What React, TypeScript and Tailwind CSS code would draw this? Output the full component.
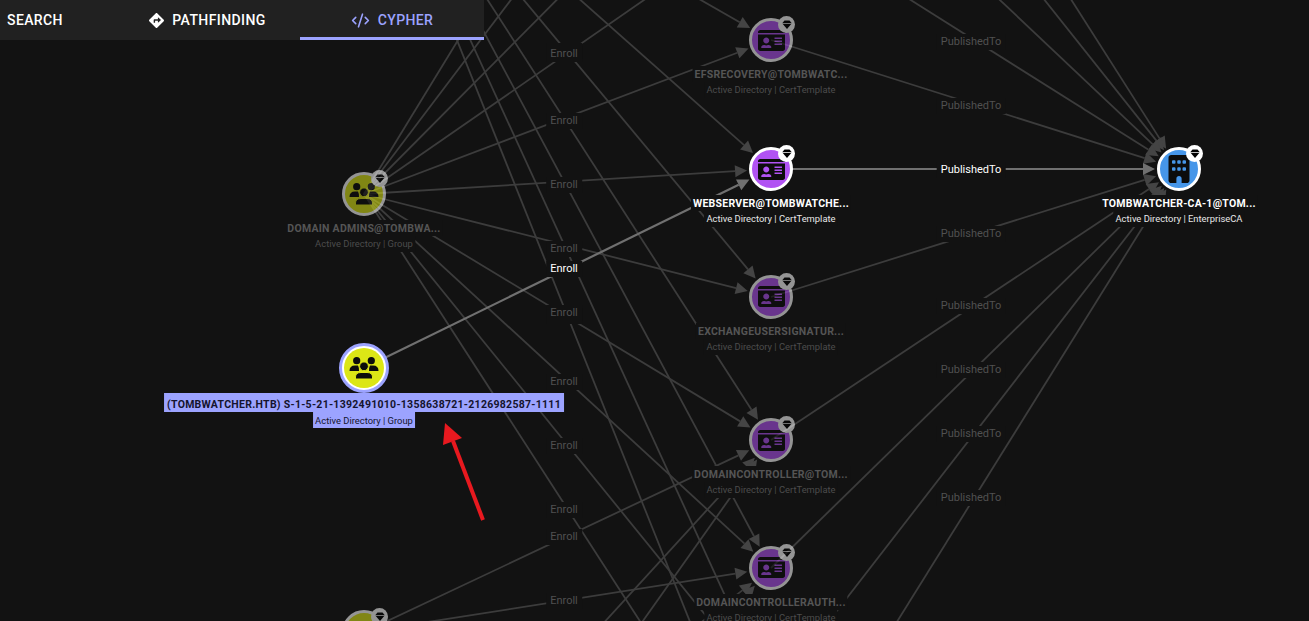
import { FaBuilding } from "react-icons/fa6";
import { FaDirections, FaIdCard } from "react-icons/fa";
import { CodeXml } from "lucide-react";

const GROUP_X = 364;
const CERT_X = 771;
const CA = { x: 1179, y: 169 };

const certYs = [-472, -344, -216, -88, 40, 169, 297, 440, 568, 696, 824];

type Edge = { from: [number, number]; to: [number, number]; hi?: boolean };

const groupEdges: Edge[] = [];
certYs.forEach((c) => {
  if (c > -88) groupEdges.push({ from: [GROUP_X, -192], to: [CERT_X, c] });
  groupEdges.push({ from: [GROUP_X, 194], to: [CERT_X, c] });
});
[
  [632, 440],
  [632, 568],
  [885, 440],
  [885, 568],
  [1015, 440],
  [1015, 568],
].forEach(([y, c]) => groupEdges.push({ from: [GROUP_X, y], to: [CERT_X, c] }));

const publishEdges: Edge[] = certYs
  .filter((c) => c !== 169)
  .map((c) => ({ from: [CERT_X, c], to: [CA.x, CA.y] }));

const hiEdges: Edge[] = [
  { from: [GROUP_X, 368], to: [CERT_X, 169], hi: true },
  { from: [CERT_X, 169], to: [CA.x, CA.y], hi: true },
];

// painted in order, so the later one of an overlapping pair stays readable
const enrollLabels = [51, 54, 121, 185, 249, 316, 313, 382, 446, 510, 537, 601];
const publishLabels = [42, 106, 234, 306, 370, 434, 498];

function EdgeLine({ edge }: { edge: Edge }) {
  const [x1, y1] = edge.from;
  const [x2, y2] = edge.to;
  const len = Math.hypot(x2 - x1, y2 - y1);
  const ux = (x2 - x1) / len;
  const uy = (y2 - y1) / len;
  const tipX = x2 - ux * 24;
  const tipY = y2 - uy * 24;
  const baseX = tipX - ux * 12;
  const baseY = tipY - uy * 12;
  const color = edge.hi ? "#707070" : "#3c3c3c";
  const head = edge.hi ? "#707070" : "#444444";
  return (
    <g>
      <line x1={x1} y1={y1} x2={baseX} y2={baseY} stroke={color} strokeWidth={edge.hi ? 2.2 : 1.8} />
      <polygon
        fill={head}
        points={`${tipX},${tipY} ${baseX - uy * 6},${baseY + ux * 6} ${baseX + uy * 6},${baseY - ux * 6}`}
      />
    </g>
  );
}

function EdgeLabel({ text, x, y, hi }: { text: string; x: number; y: number; hi?: boolean }) {
  return (
    <div
      className={`absolute -translate-x-1/2 -translate-y-1/2 bg-[#121212] px-1 text-[11px] leading-4 whitespace-nowrap ${
        hi ? "text-white" : "text-[#505050]"
      }`}
      style={{ left: x, top: y }}
    >
      {text}
    </div>
  );
}

function GroupIcon({ bg }: { bg: string }) {
  return (
    <svg width={30} height={24} viewBox="-15 -12 30 24" fill="#0c0c0c">
      <circle cx={-7.3} cy={-7.3} r={3.6} />
      <circle cx={7.3} cy={-7.3} r={3.6} />
      <path d="M-14.5 3Q-14.5 -2.5 -9 -2.5H-6Q-5 -1 -5 3Z" />
      <path d="M14.5 3Q14.5 -2.5 9 -2.5H6Q5 -1 5 3Z" />
      <circle cx={0} cy={-1.7} r={4.4} stroke={bg} strokeWidth={1} />
      <path d="M-8.5 11V9Q-8.5 4.5 -3 4.5H3Q8.5 4.5 8.5 9V11Z" stroke={bg} strokeWidth={1} />
    </svg>
  );
}

function GemIcon() {
  return (
    <svg width={10} height={9} viewBox="0 0 12 10.5" fill="#000000">
      <path d="M3 0.3H9L11.7 3.6H0.3Z" />
      <path d="M0.9 4.5H11.1L6 10.5Z" />
    </svg>
  );
}

type NodeProps = {
  x: number;
  y: number;
  kind: "group" | "cert" | "ca";
  name?: string;
  sub?: string;
  active?: boolean;
};

function GraphNode({ x, y, kind, name, sub, active }: NodeProps) {
  const fill =
    kind === "group" ? "bg-[#dce616]" : kind === "cert" ? "bg-[#b153f3]" : "bg-[#4696e9]";
  return (
    <>
      <div
        className={`absolute h-11 w-11 -translate-x-1/2 -translate-y-1/2 ${active ? "" : "opacity-55"}`}
        style={{ left: x, top: y }}
      >
        <div
          className={`flex h-full w-full items-center justify-center rounded-full border-[3px] border-white ${fill} text-[#0c0c0c]`}
        >
          {kind === "group" && <GroupIcon bg="#dce616" />}
          {kind === "cert" && <FaIdCard size={27} />}
          {kind === "ca" && <FaBuilding size={28} />}
        </div>
        <div className="absolute -top-[2px] -right-[2px] flex h-[17px] w-[17px] items-center justify-center rounded-full bg-white">
          <GemIcon />
        </div>
      </div>
      {name && (
        <div
          className={`absolute flex -translate-x-1/2 flex-col items-center whitespace-nowrap ${
            active ? "text-white" : "text-[#555555]"
          }`}
          style={{ left: x, top: y + 26 }}
        >
          <div className="bg-[#121212] px-0.5 pt-0.5 text-[10.5px] leading-[14px] font-bold tracking-[0.25px]">
            {name}
          </div>
          <div
            className={`bg-[#121212] px-0.5 pt-[2px] pb-0.5 text-[9.4px] leading-[12px] ${
              active ? "text-[#e8e8e8]" : "text-[#4c4c4c]"
            }`}
          >
            {sub}
          </div>
        </div>
      )}
    </>
  );
}

function SelectedNode() {
  return (
    <>
      <div
        className="absolute flex h-[50px] w-[50px] -translate-x-1/2 -translate-y-1/2 items-center justify-center rounded-full border-[3px] border-[#9ca3ff] bg-white"
        style={{ left: GROUP_X, top: 368 }}
      >
        <div className="flex h-10 w-10 items-center justify-center rounded-full bg-[#dce616]">
          <GroupIcon bg="#dce616" />
        </div>
      </div>
      <div
        className="absolute flex -translate-x-1/2 flex-col items-center whitespace-nowrap text-[#14142e]"
        style={{ left: GROUP_X, top: 393 }}
      >
        <div className="bg-[#9ca3ff] px-[3px] pt-1 text-[10.5px] leading-[15px] font-bold tracking-[0.28px]">
          (TOMBWATCHER.HTB) S-1-5-21-1392491010-1358638721-2126982587-1111
        </div>
        <div className="bg-[#9ca3ff] px-0.5 pt-px text-[9.4px] leading-[15px]">
          Active Directory | Group
        </div>
      </div>
    </>
  );
}

function Toolbar() {
  return (
    <div className="absolute top-0 left-0 flex h-10 w-[484px] bg-[#212121] text-sm font-medium tracking-[0.4px] text-white">
      <div className="flex w-[100px] items-center pl-[7px]">SEARCH</div>
      <div className="flex w-[200px] items-center justify-center gap-2 pl-[15px]">
        <FaDirections size={15} />
        PATHFINDING
      </div>
      <div className="flex w-[184px] items-center justify-center gap-2 border-b-[3px] border-[#9ca3ff] pt-[3px] text-[#9ca3ff]">
        <CodeXml size={19} strokeWidth={2} />
        CYPHER
      </div>
    </div>
  );
}

export default function App() {
  return (
    <div className="relative h-[621px] w-[1309px] overflow-hidden bg-[#121212] font-['Roboto',sans-serif]">
      <svg className="absolute inset-0" width={1309} height={621}>
        {groupEdges.map((e, i) => (
          <EdgeLine key={i} edge={e} />
        ))}
        {publishEdges.map((e, i) => (
          <EdgeLine key={i} edge={e} />
        ))}
      </svg>

      {enrollLabels.map((y, i) => (
        <EdgeLabel key={i} text="Enroll" x={564} y={y} />
      ))}
      {publishLabels.map((y) => (
        <EdgeLabel key={y} text="PublishedTo" x={971} y={y} />
      ))}

      <svg className="absolute inset-0" width={1309} height={621}>
        {hiEdges.map((e, i) => (
          <EdgeLine key={i} edge={e} />
        ))}
      </svg>
      <EdgeLabel text="Enroll" x={564} y={269} hi />
      <EdgeLabel text="PublishedTo" x={971} y={170} hi />

      <GraphNode x={364} y={194} kind="group" name="DOMAIN ADMINS@TOMBWA..." sub="Active Directory | Group" />
      <GraphNode x={364} y={632} kind="group" />
      <GraphNode x={771} y={40} kind="cert" name="EFSRECOVERY@TOMBWATC..." sub="Active Directory | CertTemplate" />
      <GraphNode x={771} y={296.5} kind="cert" name="EXCHANGEUSERSIGNATUR..." sub="Active Directory | CertTemplate" />
      <GraphNode x={771} y={440} kind="cert" name="DOMAINCONTROLLER@TOM..." sub="Active Directory | CertTemplate" />
      <GraphNode x={771} y={567.5} kind="cert" name="DOMAINCONTROLLERAUTH..." sub="Active Directory | CertTemplate" />
      <GraphNode x={771} y={169} kind="cert" name="WEBSERVER@TOMBWATCHE..." sub="Active Directory | CertTemplate" active />
      <GraphNode x={1179} y={169} kind="ca" name="TOMBWATCHER-CA-1@TOM..." sub="Active Directory | EnterpriseCA" active />
      <SelectedNode />

      {/* annotation arrow from the write-up */}
      <svg className="absolute inset-0" width={1309} height={621}>
        <line x1={483} y1={520} x2={453} y2={441} stroke="#e8191f" strokeWidth={4} />
        <polygon points="445,423 462,438 443,445" fill="#e8191f" />
      </svg>

      <Toolbar />
    </div>
  );
}
